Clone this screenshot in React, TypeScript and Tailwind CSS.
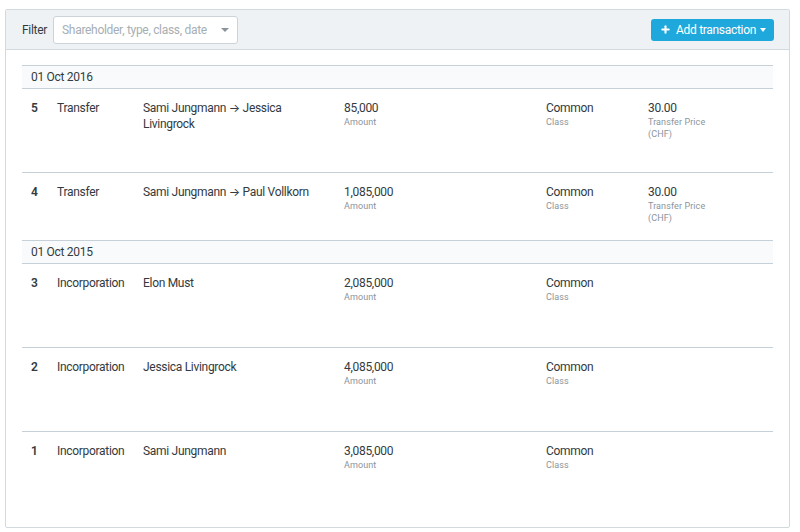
import { Plus } from "lucide-react";

type Tx = {
  id: number;
  type: string;
  from: string;
  to?: string;
  amount: string;
  cls: string;
  price?: string;
};

const groups: { date: string; items: Tx[] }[] = [
  {
    date: "01 Oct 2016",
    items: [
      { id: 5, type: "Transfer", from: "Sami Jungmann", to: "Jessica Livingrock", amount: "85,000", cls: "Common", price: "30.00" },
      { id: 4, type: "Transfer", from: "Sami Jungmann", to: "Paul Vollkorn", amount: "1,085,000", cls: "Common", price: "30.00" },
    ],
  },
  {
    date: "01 Oct 2015",
    items: [
      { id: 3, type: "Incorporation", from: "Elon Must", amount: "2,085,000", cls: "Common" },
      { id: 2, type: "Incorporation", from: "Jessica Livingrock", amount: "4,085,000", cls: "Common" },
      { id: 1, type: "Incorporation", from: "Sami Jungmann", amount: "3,085,000", cls: "Common" },
    ],
  },
];

function Label({ children }: { children: React.ReactNode }) {
  return <div className="text-[9px] leading-[12px] text-[#8a949c] tracking-[0.1px]">{children}</div>;
}

function Row({ tx, last }: { tx: Tx; last: boolean }) {
  return (
    <div
      className={
        "flex shrink-0 text-[12px] leading-[16px] text-[#333a40] pt-[11px] " +
        (last ? "h-[67px]" : "h-[84px] border-b border-[#c5d0d8]")
      }
    >
      <div className="w-[35px] pl-[9px] font-semibold">{tx.id}</div>
      <div className="w-[86px]">{tx.type}</div>
      <div className="w-[201px] pr-[30px]">
        {tx.to ? `${tx.from} → ${tx.to}` : tx.from}
      </div>
      <div className="w-[202px]">
        <div>{tx.amount}</div>
        <Label>Amount</Label>
      </div>
      <div className="w-[102px]">
        <div>{tx.cls}</div>
        <Label>Class</Label>
      </div>
      {tx.price && (
        <div className="w-[76px]">
          <div>{tx.price}</div>
          <Label>Transfer Price (CHF)</Label>
        </div>
      )}
    </div>
  );
}

export default function App() {
  return (
    <div className="w-[800px] h-[532px] bg-white pt-[9px] px-[5px] font-['Roboto','Inter',sans-serif] tracking-[-0.3px]">
      <div className="w-[785px] h-[519px] border border-[#d3dade] rounded-[2px] flex flex-col overflow-hidden">
        {/* header */}
        <div className="h-[40px] shrink-0 bg-[#eef2f5] border-b border-[#d3dade] flex items-center pl-[16px] pr-[15px]">
          <span className="text-[12px] text-[#333a40] mr-[6px]">Filter</span>
          <div className="w-[185px] h-[28px] bg-white border border-[#cdd4d9] rounded-[3px] flex items-center justify-between pl-[8px] pr-[8px]">
            <span className="text-[12px] text-[#a6aeb4] whitespace-nowrap">Shareholder, type, class, date</span>
            <span className="w-0 h-0 border-l-[4px] border-r-[4px] border-t-[4px] border-l-transparent border-r-transparent border-t-[#8a949c]" />
          </div>
          <div className="flex-1" />
          <button className="h-[22px] w-[123px] bg-[#1fa8dc] rounded-[3px] text-white text-[12px] flex items-center pl-[9px] gap-[5px]">
            <Plus className="w-[11px] h-[11px]" strokeWidth={4.5} />
            <span>Add transaction</span>
            <span className="w-0 h-0 -ml-[1px] border-l-[3.5px] border-r-[3.5px] border-t-[4px] border-l-transparent border-r-transparent border-t-white" />
          </button>
        </div>
        {/* body */}
        <div className="px-[16px] pt-[15px]">
          {groups.map((g) => (
            <div key={g.date}>
              <div className="h-[24px] bg-[#f9fafb] border-t border-b border-[#c5d0d8] flex items-center pl-[9px] text-[12px] text-[#333a40]">
                {g.date}
              </div>
              {g.items.map((tx, i) => (
                <Row key={tx.id} tx={tx} last={i === g.items.length - 1} />
              ))}
            </div>
          ))}
        </div>
      </div>
    </div>
  );
}
